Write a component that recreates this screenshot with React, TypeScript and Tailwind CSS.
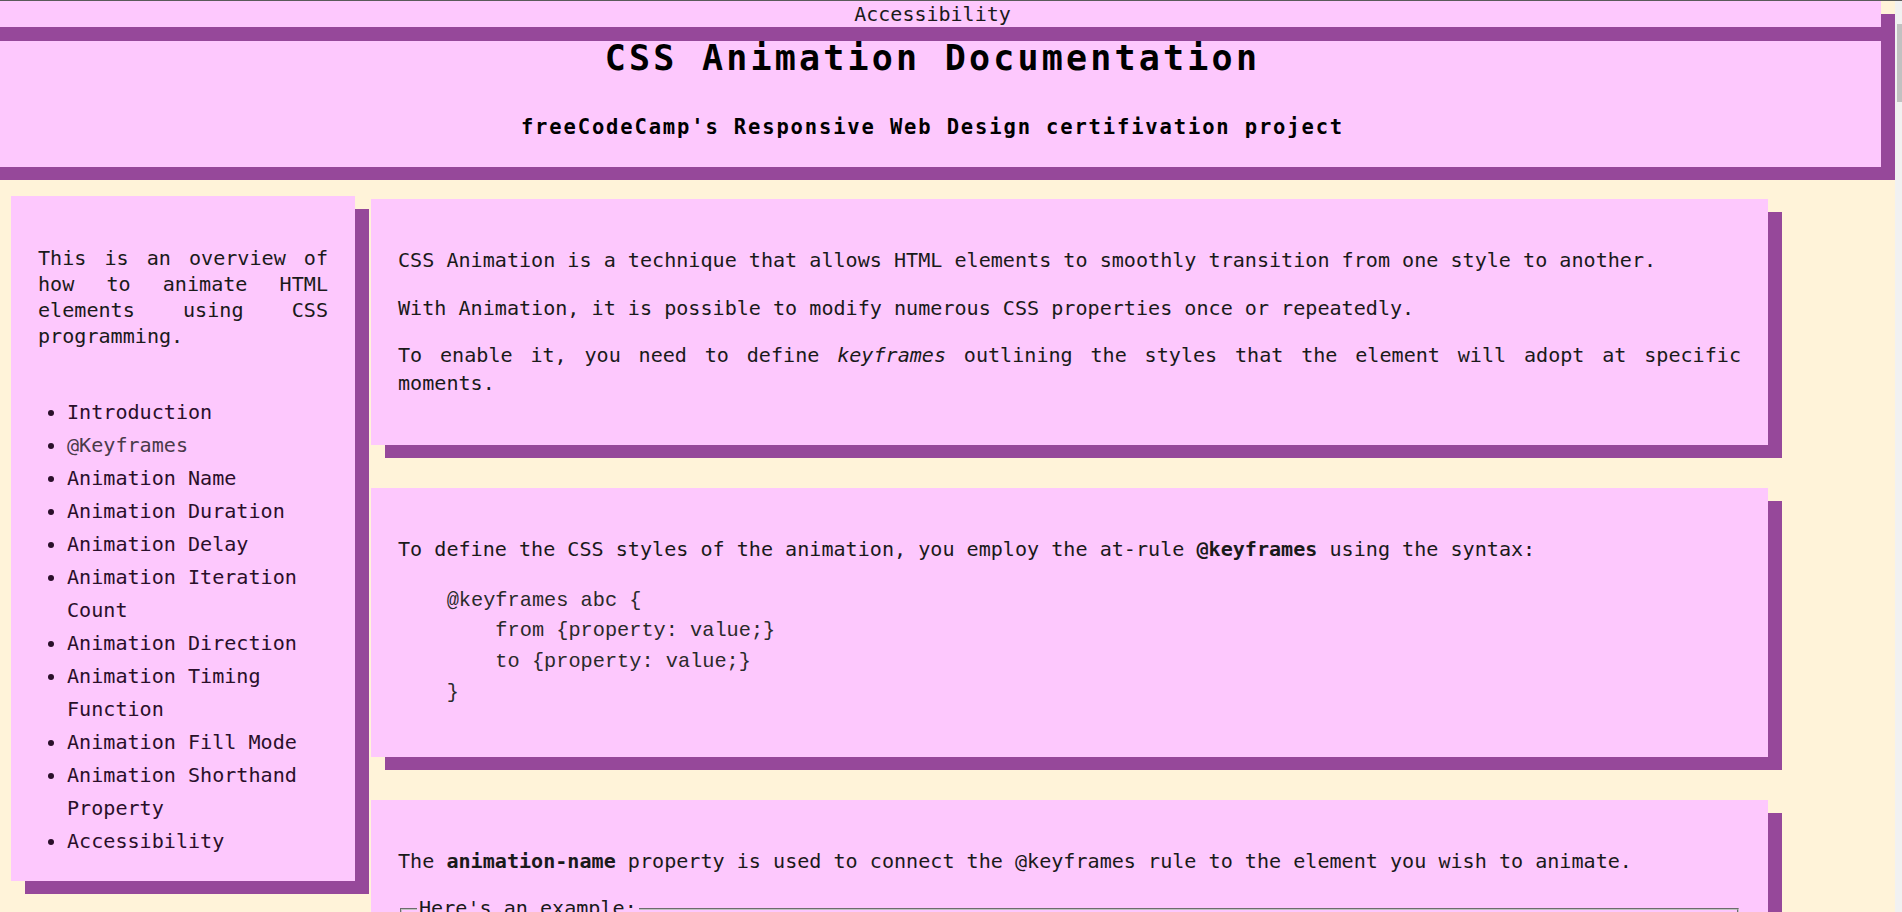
const mono = "font-['DejaVu_Sans_Mono',monospace]";

const navItems = [
  "Introduction",
  "@Keyframes",
  "Animation Name",
  "Animation Duration",
  "Animation Delay",
  "Animation Iteration Count",
  "Animation Direction",
  "Animation Timing Function",
  "Animation Fill Mode",
  "Animation Shorthand Property",
  "Accessibility",
];

const code = `    @keyframes abc {
        from {property: value;}
        to {property: value;}
    }`;

function Card({ children }: { children: React.ReactNode }) {
  return (
    <section className="bg-[#fdc8fd] px-[27px] pt-[48px] pb-[48px] text-justify shadow-[14px_13px_0_0_#96489a]">
      {children}
    </section>
  );
}

export default function App() {
  return (
    <div
      className={`flex h-[912px] w-[1902px] overflow-hidden border-t border-[#5a5a5a] bg-[#fff3d9] ${mono}`}
    >
      <div className="w-[1895px]">
        {/* header */}
        <div className="mt-[13px] flex w-[1895px] flex-col bg-[#96489a] pb-[13px]">
          <div className="-mt-[13px] h-[26px] w-[1881px] bg-[#fdc8fd] pr-[16px] text-center text-[20px] leading-[26px] text-[#1a1a1a]">
            Accessibility
          </div>
          <div className="mt-[14px] h-[126px] w-[1881px] bg-[#fdc8fd] pr-[16px] text-center text-black">
            <h1 className="text-[35px] leading-none font-bold tracking-[3.2px]">
              CSS Animation Documentation
            </h1>
            <p className="mt-[41px] text-[20.5px] leading-none font-bold tracking-[1.85px]">
              freeCodeCamp's Responsive Web Design certifivation project
            </p>
          </div>
        </div>

        {/* body */}
        <div className="flex items-start gap-[16px] pt-[16px] pl-[11px] text-[20.1px]">
          <aside className="w-[344px] shrink-0 bg-[#fdc8fd] px-[27px] pt-[49px] pb-[23px] shadow-[14px_13px_0_0_#96489a]">
            <p className="text-justify leading-[26px] text-[#1a1a1a]">
              This is an overview of how to animate HTML elements using CSS
              programming.
            </p>
            <ul className="mt-[47px] list-disc pl-[29px] leading-[33px] text-[#2a0f2a]">
              {navItems.map((item) => (
                <li key={item}>
                  <span
                    className={item === "@Keyframes" ? "text-[#4a3a4a]" : ""}
                  >
                    {item}
                  </span>
                </li>
              ))}
            </ul>
          </aside>

          <main className="mt-[3px] flex w-[1397px] shrink-0 flex-col gap-[43px] leading-[27.5px] text-[#1a1a1a]">
            <Card>
              <p>
                CSS Animation is a technique that allows HTML elements to
                smoothly transition from one style to another.
              </p>
              <p className="mt-[20px]">
                With Animation, it is possible to modify numerous CSS
                properties once or repeatedly.
              </p>
              <p className="mt-[20px]">
                To enable it, you need to define <em>keyframes</em> outlining
                the styles that the element will adopt at specific moments.
              </p>
            </Card>

            <Card>
              <p>
                To define the CSS styles of the animation, you employ the
                at-rule <strong>@keyframes</strong> using the syntax:
              </p>
              <pre className="mt-[22px] font-['Liberation_Mono',monospace] text-[20.3px] leading-[30.8px] text-[#2a2a2a]">
                {code}
              </pre>
            </Card>

            <Card>
              <p>
                The <strong>animation-name</strong> property is used to
                connect the @keyframes rule to the element you wish to
                animate.
              </p>
              <fieldset className="mx-[2px] mt-[20px] border-2 border-[#c0c0c0] px-[15px] pb-[12px] [border-style:groove]">
                <legend className="px-[2px]">Here's an example:</legend>
                <p>
                  div {"{"} animation-name: abc; {"}"}
                </p>
              </fieldset>
            </Card>
          </main>
        </div>
      </div>

      {/* scrollbar */}
      <div className="w-[7px] shrink-0 bg-[#f1f1f1]">
        <div className="mt-[23px] ml-[2px] h-[78px] bg-[#c1c1c1]" />
      </div>
    </div>
  );
}
